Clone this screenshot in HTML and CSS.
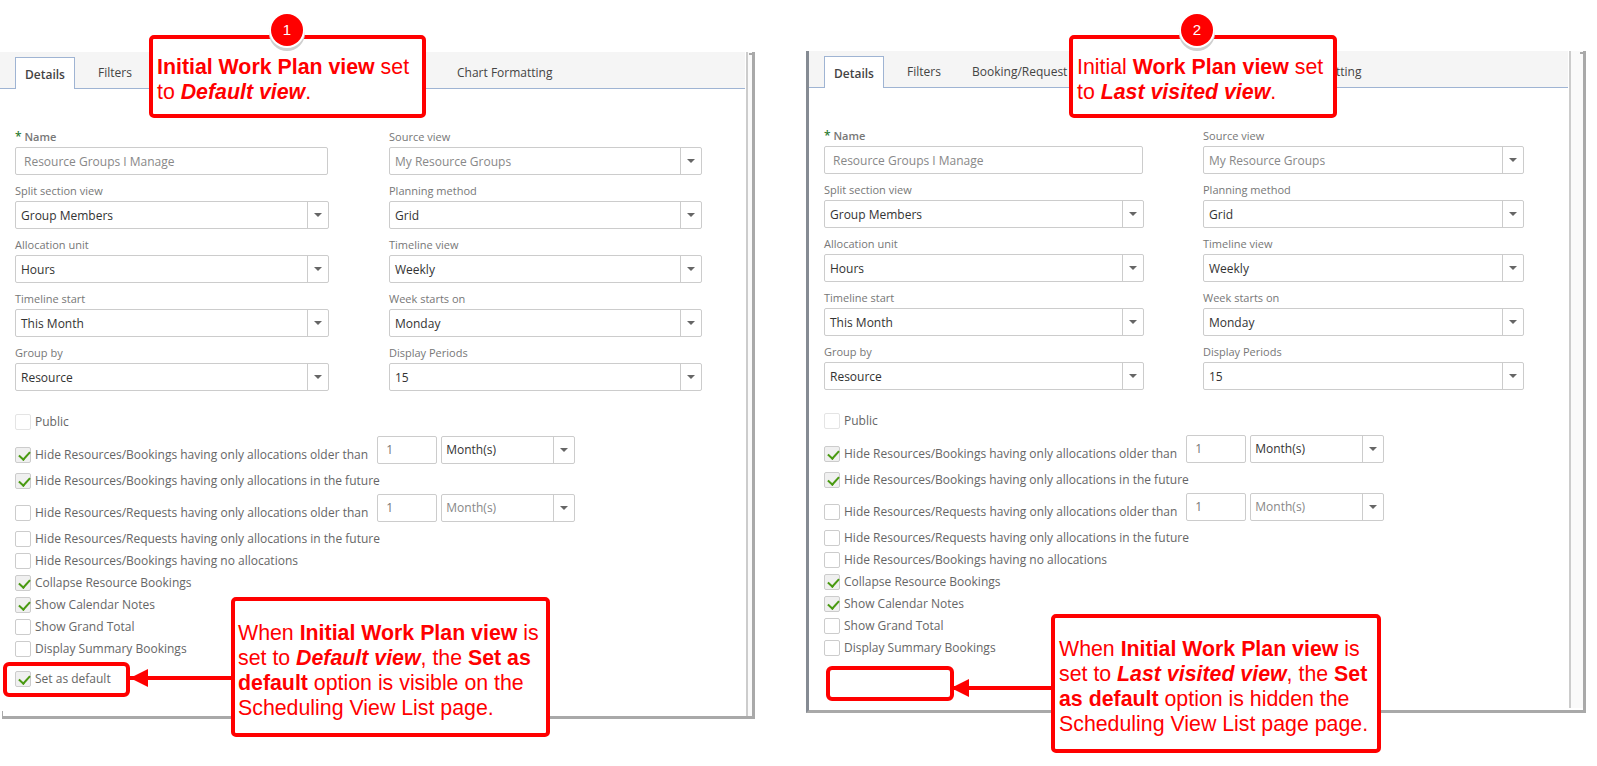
FILE: index.html
```html
<!DOCTYPE html>
<html lang="en">
  <head>
    <meta charset="UTF-8" />
    <title>Scheduling View - Initial Work Plan view</title>
    <link rel="stylesheet" href="styles.css">
  </head>
  <body>
    <div class="page">
      <!-- Panel 1 -->
      <div class="panel panel-left">
        <div class="panel-main">
          <div class="tabs">
            <div class="tab active">Details</div>
            <div class="tab tab-filters">Filters</div>
            <div class="tab tab-booking"></div>
            <div class="tab">Chart Formatting</div>
          </div>
          <div class="panel-body">
            <div class="field-grid">
              <div class="field">
                <label class="req"><span class="star">*</span> Name</label>
                <div class="input off">Resource Groups I Manage</div>
              </div>
              <div class="field">
                <label>Source view</label>
                <div class="select off"><span>My Resource Groups</span><i class="caret"></i></div>
              </div>
              <div class="field">
                <label>Split section view</label>
                <div class="select"><span>Group Members</span><i class="caret"></i></div>
              </div>
              <div class="field">
                <label>Planning method</label>
                <div class="select"><span>Grid</span><i class="caret"></i></div>
              </div>
              <div class="field">
                <label>Allocation unit</label>
                <div class="select"><span>Hours</span><i class="caret"></i></div>
              </div>
              <div class="field">
                <label>Timeline view</label>
                <div class="select"><span>Weekly</span><i class="caret"></i></div>
              </div>
              <div class="field">
                <label>Timeline start</label>
                <div class="select"><span>This Month</span><i class="caret"></i></div>
              </div>
              <div class="field">
                <label>Week starts on</label>
                <div class="select"><span>Monday</span><i class="caret"></i></div>
              </div>
              <div class="field">
                <label>Group by</label>
                <div class="select"><span>Resource</span><i class="caret"></i></div>
              </div>
              <div class="field">
                <label>Display Periods</label>
                <div class="select"><span>15</span><i class="caret"></i></div>
              </div>
            </div>

            <div class="checks">
              <div class="check check-public"><i class="box faint"></i>Public</div>
              <div class="check check-tall">
                <i class="box on"></i>Hide Resources/Bookings having only allocations older than
                <div class="input small">1</div>
                <div class="select unit"><span>Month(s)</span><i class="caret"></i></div>
              </div>
              <div class="check check-after"><i class="box on"></i>Hide Resources/Bookings having only allocations in the future</div>
              <div class="check check-tall">
                <i class="box"></i>Hide Resources/Requests having only allocations older than
                <div class="input small">1</div>
                <div class="select unit off"><span>Month(s)</span><i class="caret"></i></div>
              </div>
              <div class="check check-after"><i class="box"></i>Hide Resources/Requests having only allocations in the future</div>
              <div class="check"><i class="box"></i>Hide Resources/Bookings having no allocations</div>
              <div class="check"><i class="box on"></i>Collapse Resource Bookings</div>
              <div class="check"><i class="box on"></i>Show Calendar Notes</div>
              <div class="check"><i class="box"></i>Show Grand Total</div>
              <div class="check"><i class="box"></i>Display Summary Bookings</div>
              <div class="check check-last"><i class="box on"></i>Set as default</div>
            </div>
          </div>
        </div>
        <div class="panel-rail"></div>
      </div>

      <!-- Panel 2 -->
      <div class="panel panel-right">
        <div class="panel-main">
          <div class="tabs">
            <div class="tab active">Details</div>
            <div class="tab tab-filters">Filters</div>
            <div class="tab tab-booking">Booking/Request</div>
            <div class="tab">Chart Formatting</div>
          </div>
          <div class="panel-body">
            <div class="field-grid">
              <div class="field">
                <label class="req"><span class="star">*</span> Name</label>
                <div class="input off">Resource Groups I Manage</div>
              </div>
              <div class="field">
                <label>Source view</label>
                <div class="select off"><span>My Resource Groups</span><i class="caret"></i></div>
              </div>
              <div class="field">
                <label>Split section view</label>
                <div class="select"><span>Group Members</span><i class="caret"></i></div>
              </div>
              <div class="field">
                <label>Planning method</label>
                <div class="select"><span>Grid</span><i class="caret"></i></div>
              </div>
              <div class="field">
                <label>Allocation unit</label>
                <div class="select"><span>Hours</span><i class="caret"></i></div>
              </div>
              <div class="field">
                <label>Timeline view</label>
                <div class="select"><span>Weekly</span><i class="caret"></i></div>
              </div>
              <div class="field">
                <label>Timeline start</label>
                <div class="select"><span>This Month</span><i class="caret"></i></div>
              </div>
              <div class="field">
                <label>Week starts on</label>
                <div class="select"><span>Monday</span><i class="caret"></i></div>
              </div>
              <div class="field">
                <label>Group by</label>
                <div class="select"><span>Resource</span><i class="caret"></i></div>
              </div>
              <div class="field">
                <label>Display Periods</label>
                <div class="select"><span>15</span><i class="caret"></i></div>
              </div>
            </div>

            <div class="checks">
              <div class="check check-public"><i class="box faint"></i>Public</div>
              <div class="check check-tall">
                <i class="box on"></i>Hide Resources/Bookings having only allocations older than
                <div class="input small">1</div>
                <div class="select unit"><span>Month(s)</span><i class="caret"></i></div>
              </div>
              <div class="check check-after"><i class="box on"></i>Hide Resources/Bookings having only allocations in the future</div>
              <div class="check check-tall">
                <i class="box"></i>Hide Resources/Requests having only allocations older than
                <div class="input small">1</div>
                <div class="select unit off"><span>Month(s)</span><i class="caret"></i></div>
              </div>
              <div class="check check-after"><i class="box"></i>Hide Resources/Requests having only allocations in the future</div>
              <div class="check"><i class="box"></i>Hide Resources/Bookings having no allocations</div>
              <div class="check"><i class="box on"></i>Collapse Resource Bookings</div>
              <div class="check"><i class="box on"></i>Show Calendar Notes</div>
              <div class="check"><i class="box"></i>Show Grand Total</div>
              <div class="check"><i class="box"></i>Display Summary Bookings</div>
            </div>
          </div>
        </div>
        <div class="panel-rail"></div>
      </div>

      <!-- Annotations -->
      <div class="callout callout-1">
        <b>Initial Work Plan view</b> set<br />to <b><em>Default view</em></b>.
      </div>
      <div class="badge badge-1">1</div>

      <div class="callout callout-2">
        Initial <b>Work Plan view</b> set<br />to <b><em>Last visited view</em></b>.
      </div>
      <div class="badge badge-2">2</div>

      <div class="highlight highlight-1"></div>
      <div class="arrow arrow-1"></div>
      <div class="callout callout-3">
        When <b>Initial Work Plan view</b> is<br />set to <b><em>Default view</em></b>, the <b>Set as</b><br /><b>default</b> option is visible on the<br />Scheduling View List page.
      </div>

      <div class="highlight highlight-2"></div>
      <div class="arrow arrow-2"></div>
      <div class="callout callout-4">
        When <b>Initial Work Plan view</b> is<br />set to <b><em>Last visited view</em></b>, the <b>Set</b><br /><b>as default</b> option is hidden the<br />Scheduling View List page page.
      </div>
    </div>
  </body>
</html>
```

FILE: styles.css
```css
* {
  box-sizing: border-box;
}

body {
  margin: 0;
  background: #fff;
  font-family: "Open Sans", sans-serif;
  font-size: 12px;
  color: #666;
}

.page {
  position: relative;
  display: flex;
  align-items: flex-start;
  width: 1597px;
  height: 766px;
  padding-top: 52px;
  overflow: hidden;
}

/* Panels */
.panel {
  position: relative;
  display: flex;
  border-right: 3px solid #a9a9a9;
}

/* small hook at the top of the right edge */
.panel::before {
  content: "";
  position: absolute;
  top: 1px;
  right: 0;
  width: 3px;
  height: 2px;
  background: #a9a9a9;
}

.panel-left {
  width: 755px;
  height: 667px;
}

.panel-left::after {
  content: "";
  position: absolute;
  left: 2px;
  right: -3px;
  bottom: 0;
  height: 5px;
  border-left: 1px solid #a9a9a9;
  border-bottom: 3px solid #a9a9a9;
}

.panel-right {
  width: 780px;
  height: 662px;
  margin-left: 51px;
  margin-top: -1px;
  border-left: 3px solid #858b93;
  border-bottom: 3px solid #a9a9a9;
}

.panel-main {
  flex: none;
}

.panel-left .panel-main {
  width: 746px;
}

.panel-right .panel-main {
  width: 760px;
}

.panel-rail {
  flex: 1;
  margin-bottom: 2px;
  background: #fafafa;
  border-left: 2px solid #ccc;
}

.tabs {
  display: flex;
  align-items: flex-end;
  height: 37px;
  margin-right: 1px;
  padding-left: 15px;
  background: #f5f5f5;
  border-bottom: 1px solid #9fb4d3;
}

.tab {
  height: 32px;
  padding: 8px 0 0 23px;
  color: #444;
  line-height: 18px;
  white-space: nowrap;
}

.tab-filters {
  width: 65px;
}

.tab-booking {
  width: 294px;
}

.tab.active {
  width: 60px;
  height: 32px;
  margin-bottom: -1px;
  padding: 8px 0 0;
  background: #fff;
  border: 1px solid #9fb4d3;
  border-bottom: none;
  font-weight: 600;
  text-align: center;
}

.panel-body {
  padding: 39px 0 0 15px;
}

/* Form */
.field-grid {
  display: grid;
  grid-template-columns: 314px 313px;
  column-gap: 60px;
}

.panel-right .field-grid {
  grid-template-columns: 320px 321px;
  column-gap: 59px;
}

.field {
  height: 54px;
}

.field label {
  display: block;
  height: 19px;
  font-size: 11px;
  line-height: 17px;
  color: #777;
}

.field label.req {
  font-weight: 600;
}

.star {
  color: #2e7d32;
  font-size: 12px;
}

.input,
.select {
  display: flex;
  align-items: center;
  height: 28px;
  background: #fff;
  border: 1px solid #ccc;
  border-radius: 2px;
  padding-left: 5px;
  color: #333;
}

.field .input {
  width: calc(100% - 1px);
  padding-left: 8px;
}

.input.off,
.select.off {
  color: #888;
}

.select span {
  flex: 1;
}

.caret {
  position: relative;
  width: 21px;
  height: 100%;
  border-left: 1px solid #ccc;
}

.caret::after {
  content: "";
  position: absolute;
  left: 6px;
  top: 11px;
  border-left: 4px solid transparent;
  border-right: 4px solid transparent;
  border-top: 4px solid #666;
}

/* Checkboxes */
.checks {
  padding-top: 13px;
}

.check {
  display: flex;
  align-items: center;
  height: 22px;
  line-height: 18px;
  white-space: nowrap;
  color: #666;
}

.check-public {
  margin-bottom: 3px;
}

.check-tall {
  align-items: flex-end;
  height: 28px;
}

.check-tall .box {
  margin-bottom: 1px;
}

.check-after {
  margin-top: 6px;
  margin-bottom: 2px;
}

.check-after:nth-child(5) {
  margin-bottom: 0;
}

.check-last {
  margin-top: 8px;
}

.box {
  position: relative;
  flex: none;
  width: 16px;
  height: 16px;
  margin-right: 4px;
  border: 1px solid #ccc;
  border-radius: 2px;
  background: #fff;
}

.box.faint {
  border-color: #e4e4e4;
}

.box.on {
  background: #f0f0f0;
}

.box.on::after {
  content: "";
  position: absolute;
  left: 5px;
  top: 1px;
  width: 5px;
  height: 9px;
  border-right: 2.5px solid #4a9a12;
  border-bottom: 2.5px solid #4a9a12;
  transform: rotate(42deg);
}

.input.small {
  width: 60px;
  margin-left: 9px;
  padding-left: 8px;
  color: #777;
}

.select.unit {
  width: 134px;
  margin-left: 4px;
  padding-left: 4px;
}

/* Annotations */
.callout {
  position: absolute;
  background: #fff;
  border: 4px solid #f00;
  border-radius: 5px;
  color: #f00;
  font-family: "Liberation Sans", Arial, sans-serif;
  font-size: 21.33px;
  line-height: 25px;
  white-space: nowrap;
}

.callout-1 {
  left: 149px;
  top: 35px;
  width: 277px;
  height: 83px;
  padding: 16px 0 0 4px;
}

.callout-2 {
  left: 1069px;
  top: 35px;
  width: 268px;
  height: 83px;
  padding: 16px 0 0 4px;
}

.callout-3 {
  left: 231px;
  top: 597px;
  width: 319px;
  height: 140px;
  padding: 20px 0 0 3px;
}

.callout-4 {
  left: 1051px;
  top: 614px;
  width: 330px;
  height: 139px;
  padding: 19px 0 0 4px;
}

.badge {
  position: absolute;
  top: 14px;
  width: 32px;
  height: 32px;
  border-radius: 50%;
  background: #f00;
  color: #fff;
  font-family: "Liberation Sans", Arial, sans-serif;
  font-size: 15px;
  line-height: 32px;
  text-align: center;
  box-shadow: 0 0 0 2px #fff, 0 3px 0 2px #cfcfcf;
}

.badge-1 {
  left: 271px;
}

.badge-2 {
  left: 1181px;
}

.highlight {
  position: absolute;
  height: 35px;
  border: 4px solid #f00;
  border-radius: 6px;
}

.highlight-1 {
  left: 3px;
  top: 662px;
  width: 127px;
}

.highlight-2 {
  left: 826px;
  top: 666px;
  width: 128px;
}

.arrow {
  position: absolute;
  height: 4px;
  background: #f00;
}

.arrow::before {
  content: "";
  position: absolute;
  left: 0;
  top: -7px;
  border-top: 9px solid transparent;
  border-bottom: 9px solid transparent;
  border-right: 18px solid #f00;
}

.arrow-1 {
  left: 130px;
  top: 676px;
  width: 102px;
}

.arrow-2 {
  left: 951px;
  top: 686px;
  width: 101px;
}
```
